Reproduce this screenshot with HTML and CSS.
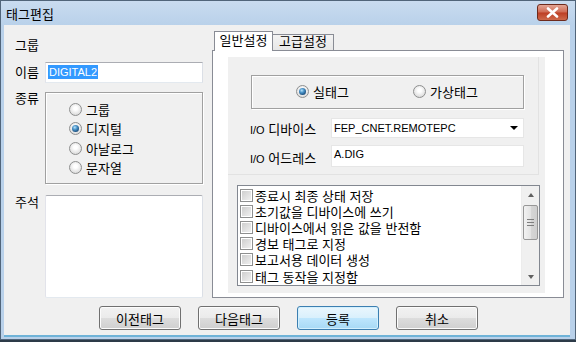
FILE: index.html
```html
<!DOCTYPE html>
<html lang="ko">
<head>
  <meta charset="UTF-8">
  <title>태그편집</title>
  <link rel="stylesheet" href="styles.css">
</head>
<body>
  <div class="window">
    <div class="titlebar">
      <span class="title">태그편집</span>
      <span class="close">
        <svg width="13" height="11" viewBox="0 0 13 11"><path d="M2 1.5 L11 9.5 M11 1.5 L2 9.5" stroke="#fff" stroke-width="2.6" stroke-linecap="round"/></svg>
      </span>
    </div>

    <div class="client">
      <div class="main">
        <div class="left">
          <div class="row r-group"><span class="label">그룹</span></div>
          <div class="row r-name">
            <span class="label">이름</span>
            <div class="textbox name"><span class="sel">DIGITAL2</span></div>
          </div>
          <div class="row r-kind">
            <span class="label">종류</span>
            <div class="groupbox kind">
              <div class="radio"><i class="dot"></i>그룹</div>
              <div class="radio"><i class="dot on"></i>디지털</div>
              <div class="radio"><i class="dot"></i>아날로그</div>
              <div class="radio"><i class="dot"></i>문자열</div>
            </div>
          </div>
          <div class="row r-note">
            <span class="label">주석</span>
            <div class="textbox note"></div>
          </div>
        </div>

        <div class="right">
          <div class="tabs">
            <span class="tab active">일반설정</span>
            <span class="tab">고급설정</span>
          </div>
          <div class="tab-panel">
            <div class="sheet">
              <div class="upper">
                <div class="groupbox kind-box">
                  <div class="radio inline"><i class="dot on"></i>실태그</div>
                  <div class="radio"><i class="dot"></i>가상태그</div>
                </div>
                <div class="form-row device">
                  <span class="flabel"><span class="latin">I/O</span> 디바이스</span>
                  <div class="combo"><span class="latin">FEP_CNET.REMOTEPC</span><i class="arrow"></i></div>
                </div>
                <div class="form-row address">
                  <span class="flabel"><span class="latin">I/O</span> 어드레스</span>
                  <div class="textbox addr"><span class="latin">A.DIG</span></div>
                </div>
              </div>

              <div class="checklist">
                <ul class="items">
                  <li><i class="check"></i>종료시 최종 상태 저장</li>
                  <li><i class="check"></i>초기값을 디바이스에 쓰기</li>
                  <li><i class="check"></i>디바이스에서 읽은 값을 반전함</li>
                  <li><i class="check"></i>경보 태그로 지정</li>
                  <li><i class="check"></i>보고서용 데이터 생성</li>
                  <li><i class="check"></i>태그 동작을 지정함</li>
                </ul>
                <div class="scrollbar">
                  <div class="sb-btn"><i class="up"></i></div>
                  <div class="thumb"><i></i><i></i><i></i></div>
                  <div class="sb-track"></div>
                  <div class="sb-btn"><i class="down"></i></div>
                </div>
              </div>
            </div>
          </div>
        </div>
      </div>

      <div class="buttons">
        <button class="button">이전태그</button>
        <button class="button">다음태그</button>
        <button class="button default">등록</button>
        <button class="button">취소</button>
      </div>
    </div>
  </div>
</body>
</html>
```

FILE: styles.css
```css
body {
  margin: 0;
  padding: 0;
  font-family: "Liberation Sans", "Noto Sans CJK KR", sans-serif;
  font-size: 13px;
  color: #000;
  background-color: #fff;
}

.window {
  width: 576px;
  height: 342px;
  box-sizing: border-box;
  display: flex;
  flex-direction: column;
  background: linear-gradient(#cadcf0, #b9d1ea 25px, #b9d1ea);
  box-shadow: inset 0 0 0 1px #51657a;
  border-bottom: 2px solid #2d3b48;
}

.titlebar {
  height: 25px;
  display: flex;
  align-items: flex-start;
  justify-content: space-between;
  padding: 0 8px 0 6px;
}

.title {
  line-height: 23px;
  padding-top: 3px;
}

.close {
  width: 31px;
  height: 17px;
  margin-top: 4px;
  box-sizing: border-box;
  border: 1px solid #6e2a1c;
  border-radius: 3px;
  background: linear-gradient(#e3a595, #cf6a53 48%, #bd3e24 52%, #cd6a4c);
  display: flex;
  align-items: center;
  justify-content: center;
}

.client {
  flex: 1;
  margin: 0 6px 3px 4px;
  background-color: #f0f0f0;
  border-bottom: 2px solid #6fb3d8;
}

.main {
  display: flex;
  height: 273px;
}

/* left column */
.left {
  width: 188px;
  padding: 13px 0 0 11px;
}

.row {
  display: flex;
}

.label {
  width: 30px;
  flex-shrink: 0;
  line-height: 16px;
}

.r-group {
  height: 16px;
}

.r-name {
  margin-top: 8px;
}

.r-name .label {
  line-height: 21px;
}

.r-kind {
  margin-top: 9px;
}

.r-kind .label {
  line-height: 14px;
}

.r-note {
  margin-top: 11px;
}

.textbox {
  box-sizing: border-box;
  background-color: #fff;
  border: 1px solid;
  border-color: #abadb3 #dbdfe6 #e3e9ef #e2e3ea;
}

.textbox.name {
  width: 158px;
  height: 21px;
  padding: 2px 0 0 2px;
}

.sel {
  display: inline-block;
  vertical-align: top;
  background-color: #3399ff;
  color: #fff;
  font-size: 11px;
  line-height: 14px;
  padding: 0 1px;
}

.textbox.note {
  width: 158px;
  height: 103px;
  border-radius: 2px;
}

.groupbox {
  box-sizing: border-box;
  border: 1px solid #a0a0a0;
  box-shadow: inset 1px 1px 0 #fff, 1px 1px 0 #fff;
}

.kind {
  width: 158px;
  height: 92px;
  padding: 7px 0 0 23px;
}

.radio {
  display: flex;
  align-items: center;
  height: 19.3px;
}

.dot {
  position: relative;
  width: 13px;
  height: 13px;
  box-sizing: border-box;
  border-radius: 50%;
  border: 1px solid #8e8f8f;
  background: radial-gradient(circle at 50% 40%, #fff 20%, #e6e6e6 60%, #cfcfcf);
  margin-right: 4px;
  flex-shrink: 0;
}

.dot.on::after {
  content: "";
  position: absolute;
  left: 2px;
  top: 2px;
  width: 7px;
  height: 7px;
  border-radius: 50%;
  background: radial-gradient(circle at 40% 35%, #b8e3fb 0, #4a93c8 35%, #1b4d7c 75%, #133a5e);
}

/* tabs */
.right {
  width: 352px;
  margin-left: 9px;
  padding-top: 6px;
}

.tabs {
  display: flex;
  align-items: flex-end;
  height: 19px;
  padding-left: 2px;
}

.tab {
  box-sizing: border-box;
  height: 16px;
  width: 61px;
  text-align: center;
  line-height: 14px;
  border: 1px solid #898c95;
  border-bottom: none;
  border-left: none;
  background: linear-gradient(#f3f3f3, #e7e7e7);
}

.tab.active {
  position: relative;
  z-index: 1;
  height: 20px;
  width: 59px;
  margin-bottom: -1px;
  line-height: 17px;
  border-left: 1px solid #898c95;
  background: #fff;
}

.tab-panel {
  box-sizing: border-box;
  height: 248px;
  border: 1px solid #898c95;
  background-color: #fff;
  padding: 6px 18px 4px 15px;
}

.sheet {
  height: 236px;
  background-color: #f0f0f0;
}

.upper {
  box-sizing: border-box;
  width: 311px;
  height: 118px;
  padding: 18px 0 0 23px;
  border-right: 1px solid #e2e2e2;
  border-bottom: 1px solid #e2e2e2;
}

.kind-box {
  width: 273px;
  height: 34px;
  display: flex;
  align-items: center;
  padding-left: 44px;
}

.radio.inline {
  width: 117px;
}

.form-row {
  display: flex;
  align-items: center;
  margin-left: -1px;
}

.device {
  margin-top: 9px;
}

.address {
  margin-top: 7px;
  align-items: flex-start;
}

.address .flabel {
  line-height: 22px;
  padding-top: 3px;
}

.flabel {
  width: 81px;
}

.combo {
  box-sizing: border-box;
  width: 193px;
  height: 20px;
  background-color: #fff;
  border: 1px solid #e6e6e6;
  display: flex;
  align-items: center;
  justify-content: space-between;
  padding: 0 5px 0 2px;
}

.latin {
  font-size: 11px;
}

.arrow {
  width: 0;
  height: 0;
  border-left: 4px solid transparent;
  border-right: 4px solid transparent;
  border-top: 4px solid #000;
}

.textbox.addr {
  width: 193px;
  height: 22px;
  padding: 1px 0 0 2px;
  border-color: #e6e6e6;
  line-height: 14px;
}

/* check list */
.checklist {
  box-sizing: border-box;
  width: 303px;
  height: 101px;
  margin: 10px 0 0 9px;
  border: 1px solid #828790;
  background-color: #fff;
  display: flex;
}

.items {
  flex: 1;
  list-style: none;
  margin: 0;
  padding: 1px 0 0 2px;
}

.items li {
  display: flex;
  align-items: center;
  height: 16.2px;
}

.check {
  width: 13px;
  height: 13px;
  box-sizing: border-box;
  border: 1px solid #8e8f8f;
  background: linear-gradient(135deg, #cbcbcb, #f3f3f3);
  box-shadow: inset 0 0 0 1px #fff;
  margin-right: 2px;
  flex-shrink: 0;
}

.scrollbar {
  width: 17px;
  display: flex;
  flex-direction: column;
  background-color: #f0f0f0;
  border-left: 1px solid #ececec;
}

.sb-btn {
  height: 17px;
  display: flex;
  align-items: center;
  justify-content: center;
}

.up, .down {
  width: 0;
  height: 0;
  border-left: 3.5px solid transparent;
  border-right: 3.5px solid transparent;
}

.up {
  border-bottom: 4px solid #606060;
}

.down {
  border-top: 4px solid #606060;
}

.thumb {
  box-sizing: border-box;
  height: 35px;
  margin: 2px 1px 0;
  border: 1px solid #979797;
  border-radius: 2px;
  background: linear-gradient(90deg, #f2f2f2, #e3e3e3 50%, #d6d6d6 51%, #cfcfcf);
  display: flex;
  flex-direction: column;
  align-items: center;
  justify-content: center;
  gap: 2px;
}

.thumb i {
  width: 7px;
  height: 1px;
  background-color: #7e7e7e;
}

.sb-track {
  flex: 1;
}

/* buttons */
.buttons {
  display: flex;
  gap: 17px;
  margin-top: 8px;
  padding-left: 95px;
}

.button {
  box-sizing: border-box;
  width: 82px;
  height: 24px;
  padding: 0;
  font-family: inherit;
  font-size: 13px;
  color: #000;
  border: 1px solid #707070;
  border-radius: 3px;
  background: linear-gradient(#f2f2f2, #ebebeb 49%, #dddddd 50%, #cfcfcf);
  box-shadow: inset 0 0 0 1px #fcfcfc;
}

.button.default {
  border-color: #3c7fb1;
  background: linear-gradient(#eaf6fd, #d9f0fc 49%, #bee6fd 50%, #a7d9f5);
  box-shadow: inset 0 0 0 1px #d3f0fe;
}
```
